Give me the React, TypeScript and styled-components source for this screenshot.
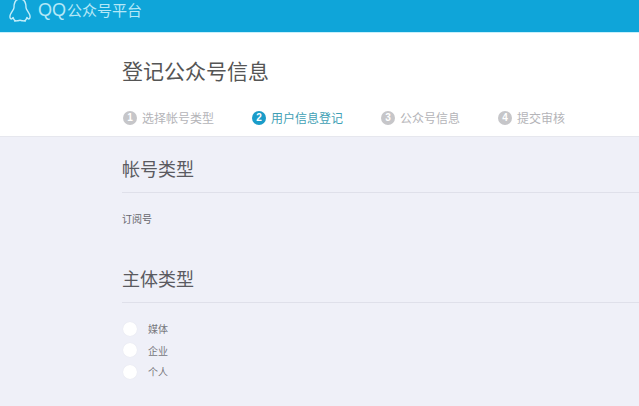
import React from 'react';
import styled, { createGlobalStyle } from 'styled-components';

const GlobalStyle = createGlobalStyle`
  html, body {
    margin: 0;
    padding: 0;
    background: #eff0f8;
  }
  body {
    font-family: "Noto Sans CJK SC", "Liberation Sans", sans-serif;
    overflow: hidden;
  }
`;

const Page = styled.div`
  width: 639px;
  height: 406px;
  overflow: hidden;
  display: flex;
  flex-direction: column;
`;

const Header = styled.header`
  height: 33px;
  flex: none;
  background: #0fa5d9;
  border-bottom: 1px solid #c8f0fb;
  box-sizing: border-box;
  display: flex;
  align-items: flex-start;
  padding-left: 8px;
  gap: 6px;
`;

const LogoText = styled.span`
  font-size: 15px;
  line-height: 20px;
  color: #b5e8f7;
`;

const LogoLatin = styled.span`
  font-family: "Liberation Sans", sans-serif;
  font-size: 18px;
  margin-right: 1px;
`;

const Hero = styled.div`
  flex: none;
  height: 104px;
  box-sizing: border-box;
  background: #fff;
  padding: 22px 0 0 122px;
  border-bottom: 1px solid #e6e7ee;
`;

const Title = styled.h1`
  margin: 0;
  font-size: 21px;
  line-height: 30px;
  font-weight: 400;
  color: #555;
`;

const Steps = styled.div`
  display: flex;
  margin-top: 24px;
`;

const Step = styled.div<{ $width: number; $active?: boolean }>`
  width: ${(p) => p.$width}px;
  display: flex;
  align-items: center;
  gap: 5px;
  font-size: 12px;
  line-height: 18px;
  color: ${(p) => (p.$active ? '#3f9fb5' : '#b4b4b8')};
`;

const StepNumber = styled.span<{ $active?: boolean }>`
  width: 14px;
  height: 14px;
  margin-left: 1px;
  border-radius: 50%;
  background: ${(p) => (p.$active ? '#1a9cc9' : '#c6c6c9')};
  color: #fff;
  font-family: "Liberation Sans", sans-serif;
  font-size: 10px;
  font-weight: 700;
  line-height: 14px;
  text-align: center;
`;

const Section = styled.section`
  padding-left: 122px;
`;

const SectionTitle = styled.h2`
  margin: 0;
  height: 56px;
  box-sizing: border-box;
  padding-top: 18px;
  font-size: 18px;
  line-height: 26px;
  font-weight: 400;
  color: #5a5a60;
  border-bottom: 1px solid #dfe0ea;
`;

const PlainValue = styled.p`
  margin: 0;
  padding-top: 18px;
  height: 54px;
  box-sizing: border-box;
  font-size: 10px;
  line-height: 16px;
  color: #66666c;
`;

const RadioList = styled.div`
  display: flex;
  flex-direction: column;
  gap: 6.5px;
  padding-top: 18px;
`;

const RadioRow = styled.label`
  display: flex;
  align-items: center;
  gap: 11px;
  height: 15px;
  font-size: 10px;
  color: #77777c;
`;

const RadioDot = styled.span`
  width: 14px;
  height: 14px;
  margin-left: 1px;
  border-radius: 50%;
  background: #fff;
  box-shadow: 0 0 1px #dcdde6;
`;

const QQLogo = () => (
  <svg width="24" height="24" viewBox="0 0 26 24" fill="none" stroke="#c3eefa" strokeWidth="1.5" strokeLinejoin="round">
    <path d="M13 -2 C7.5 -2 6.5 3 6.5 7 C6.5 9 4 11.5 2.5 15 C1.5 18 2.5 20 4 19.5 L5.5 18 C6 20 7 21 8 21.5 C6.5 22.5 7.5 21.5 10 21.5 C11.5 21.5 12 21 13 21 C14 21 14.5 21.5 16 21.5 C18.5 21.5 19.5 22.5 18 21.5 C19 21 20 20 20.5 18 L22 19.5 C23.5 20 24.5 18 23.5 15 C22 11.5 19.5 9 19.5 7 C19.5 3 18.5 -2 13 -2 Z" />
  </svg>
);

const steps = [
  { n: 1, label: '选择帐号类型', width: 129 },
  { n: 2, label: '用户信息登记', width: 129, active: true },
  { n: 3, label: '公众号信息', width: 117 },
  { n: 4, label: '提交审核', width: 90 },
];

const App: React.FC = () => (
  <Page>
    <GlobalStyle />
    <Header>
      <QQLogo />
      <LogoText>
        <LogoLatin>QQ</LogoLatin>公众号平台
      </LogoText>
    </Header>
    <Hero>
      <Title>登记公众号信息</Title>
      <Steps>
        {steps.map((s) => (
          <Step key={s.n} $width={s.width} $active={s.active}>
            <StepNumber $active={s.active}>{s.n}</StepNumber>
            {s.label}
          </Step>
        ))}
      </Steps>
    </Hero>
    <Section>
      <SectionTitle>帐号类型</SectionTitle>
      <PlainValue>订阅号</PlainValue>
    </Section>
    <Section>
      <SectionTitle>主体类型</SectionTitle>
      <RadioList>
        {['媒体', '企业', '个人'].map((t) => (
          <RadioRow key={t}>
            <RadioDot />
            {t}
          </RadioRow>
        ))}
      </RadioList>
    </Section>
  </Page>
);

export default App;
